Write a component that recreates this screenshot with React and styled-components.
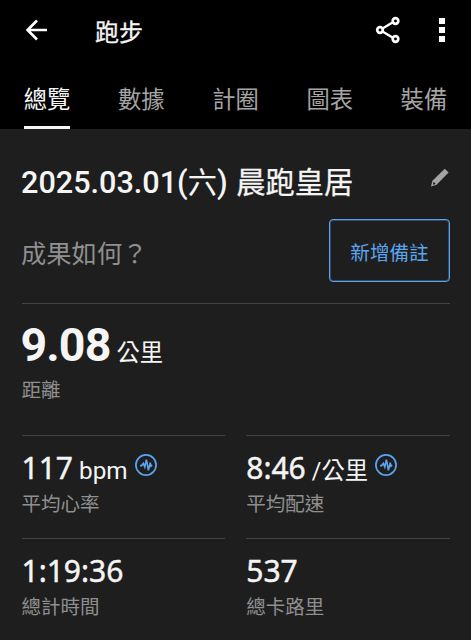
import styled, { createGlobalStyle } from 'styled-components';

const GlobalStyle = createGlobalStyle`
    * {
        box-sizing: border-box;
    }

    body {
        margin: 0;
        background: #1e1e1e;
        font-family: "Noto Sans", "Noto Sans CJK TC", sans-serif;
        color: #f5f5f5;
    }
`;

const Screen = styled.div`
    width: 471px;
    height: 640px;
    overflow: hidden;
    background: #1e1e1e;
`;

const Header = styled.header`
    height: 129px;
    background: #000;
    display: flex;
    flex-direction: column;
    justify-content: space-between;
`;

const Toolbar = styled.div`
    height: 59px;
    display: flex;
    align-items: center;
    padding: 0 22px 0 24px;
`;

const Title = styled.h1`
    flex: 1;
    margin: 2px 0 0 47px;
    font-family: "Noto Sans CJK TC", sans-serif;
    font-size: 24px;
    font-weight: 400;
    line-height: 60px;
    -webkit-text-stroke: 0.3px currentColor;
`;

const IconButton = styled.button`
    display: flex;
    padding: 0;
    border: none;
    background: none;
    color: ${props => props.$color || '#fff'};
    margin-left: ${props => props.$gap || 0}px;
    margin-bottom: ${props => props.$lift || 0}px;
    cursor: pointer;
`;

const Tabs = styled.nav`
    display: grid;
    grid-template-columns: repeat(5, 1fr);
    justify-items: center;
`;

const Tab = styled.a`
    height: 60px;
    padding-top: 9px;
    border-bottom: 3px solid ${props => props.$active ? '#f5f5f5' : 'transparent'};
    color: ${props => props.$active ? '#f5f5f5' : '#a5a5a5'};
    font-family: "Noto Sans CJK TC", sans-serif;
    font-size: 23.3px;
    line-height: 40px;
    cursor: pointer;
`;

const Content = styled.main`
    padding: 0 21px 0 21.5px;
`;

const TitleRow = styled.div`
    height: 90px;
    padding-top: 17px;
    display: flex;
    align-items: center;
    justify-content: space-between;
`;

const ActivityName = styled.h2`
    margin: 0 0 0 -0.5px;
    font-family: Roboto, "Noto Sans CJK TC", sans-serif;
    font-size: 29.2px;
    font-weight: 400;
    line-height: 40px;
    white-space: pre;
    -webkit-text-stroke: 0.3px currentColor;
`;

const ActivityDate = styled.span`
    margin-right: 1.5px;
    font-size: 30.6px;
    font-weight: 500;
    -webkit-text-stroke: 0;
`;

const Weekday = styled.span`
    font-size: 29.2px;
    font-weight: 400;
`;

const NoteRow = styled.div`
    height: 85px;
    display: flex;
    justify-content: space-between;
    border-bottom: 1px solid #444;
`;

const Prompt = styled.p`
    margin: 0 0 0 -0.5px;
    color: #8f8f8f;
    font-family: "Noto Sans CJK TC", sans-serif;
    font-size: 25.3px;
    line-height: 67px;
`;

const NoteButton = styled.button`
    width: 121px;
    height: 63px;
    padding: 2px 0 0;
    border: 1px solid #5ba4ee;
    border-radius: 4px;
    box-shadow: inset 0 0 0 1px rgba(91, 164, 238, 0.35);
    background: none;
    color: #5ba4ee;
    font-family: "Noto Sans CJK TC", sans-serif;
    font-size: 19.6px;
    line-height: 59px;
    cursor: pointer;
`;

const Distance = styled.section`
    height: 131px;
    padding-top: 11px;
`;

const StatGrid = styled.section`
    display: grid;
    grid-template-columns: 1fr 1fr;
    column-gap: 21px;
`;

const Stat = styled.div`
    height: 103px;
    padding-top: 11px;
    border-top: 1px solid #444;
`;

const ValueLine = styled.div`
    display: flex;
    align-items: baseline;
    height: ${props => props.$large ? 60 : 42}px;
    line-height: ${props => props.$large ? 61 : 42}px;
`;

const Value = styled.span`
    font-size: 30px;
    -webkit-text-stroke: 0.45px currentColor;
`;

const LargeValue = styled.span`
    margin-left: -1px;
    font-family: Roboto, sans-serif;
    font-size: 46.5px;
    font-weight: 700;
    letter-spacing: -0.9px;
`;

const Unit = styled.span`
    margin-left: 6px;
    font-family: Roboto, "Noto Sans CJK TC", sans-serif;
    font-size: ${props => props.$size || 23.3}px;
`;

const Label = styled.div`
    color: #8f8f8f;
    font-family: "Noto Sans CJK TC", sans-serif;
    font-size: 19.5px;
    line-height: 28px;
`;

const Badge = styled.span`
    align-self: flex-start;
    display: flex;
    margin: 7px 0 0 7px;
`;

function BackIcon() {
    return (
        <svg width="24" height="24" viewBox="0 0 24 24" fill="none" stroke="currentColor" strokeWidth="2.6">
            <path d="M13 2.5L3.5 12l9.5 9.5M3.5 12H23" />
        </svg>
    );
}

function ShareIcon() {
    return (
        <svg width="26" height="28" viewBox="0 0 26 28" fill="none" stroke="currentColor">
            <path d="M7.5 12.5L17.5 6.5M7.5 15.5L17.5 21.5" strokeWidth="2.4" />
            <g strokeWidth="2.7">
                <circle cx="5" cy="14" r="2.8" />
                <circle cx="20.5" cy="5" r="2.8" />
                <circle cx="20.5" cy="23" r="2.8" />
            </g>
        </svg>
    );
}

function MoreIcon() {
    return (
        <svg width="14" height="26" viewBox="0 0 14 26" fill="currentColor">
            <path d="M4 1h6v6H4zM4 10h6v6H4zM4 19h6v6H4z" />
        </svg>
    );
}

function PencilIcon() {
    return (
        <svg width="20" height="20" viewBox="0 0 20 20">
            <path d="M14.8 0.8L18.6 4.6L6.6 16.8L1 18.4L2.4 12.8Z" fill="currentColor" />
            <path d="M3.6 13.8L5.8 16L2.8 16.8Z" fill="#1e1e1e" />
        </svg>
    );
}

function PulseBadge() {
    return (
        <Badge>
            <svg width="22" height="22" viewBox="0 0 22 22" fill="none" stroke="#5ba4ee">
                <circle cx="11" cy="11" r="10.1" strokeWidth="1.7" />
                <path d="M5 11.6H6.6L8.4 9.4L9.8 13L11.4 5.6L13.4 16.4L15.2 8.8L16 12.2L17.2 11.2" strokeWidth="1.6" />
            </svg>
        </Badge>
    );
}

const tabs = ['總覽', '數據', '計圈', '圖表', '裝備'];

const stats = [
    { value: '117', unit: 'bpm', unitSize: 24.3, label: '平均心率', zone: true },
    { value: '8:46', unit: '/公里', label: '平均配速', zone: true },
    { value: '1:19:36', label: '總計時間' },
    { value: '537', label: '總卡路里' },
];

export default function App() {
    return (
        <Screen>
            <GlobalStyle />
            <Header>
                <Toolbar>
                    <IconButton aria-label="返回"><BackIcon /></IconButton>
                    <Title>跑步</Title>
                    <IconButton aria-label="分享"><ShareIcon /></IconButton>
                    <IconButton aria-label="更多" $gap={34}><MoreIcon /></IconButton>
                </Toolbar>
                <Tabs>
                    {tabs.map((tab, i) => <Tab key={tab} $active={i === 0}>{tab}</Tab>)}
                </Tabs>
            </Header>
            <Content>
                <TitleRow>
                    <ActivityName>
                        <ActivityDate>2025.03.01(<Weekday>六</Weekday>)</ActivityDate> 晨跑皇居
                    </ActivityName>
                    <IconButton aria-label="編輯" $color="#a3a3a3" $lift={9}><PencilIcon /></IconButton>
                </TitleRow>
                <NoteRow>
                    <Prompt>成果如何？</Prompt>
                    <NoteButton>新增備註</NoteButton>
                </NoteRow>
                <Distance>
                    <ValueLine $large>
                        <LargeValue>9.08</LargeValue>
                        <Unit>公里</Unit>
                    </ValueLine>
                    <Label>距離</Label>
                </Distance>
                <StatGrid>
                    {stats.map(stat => (
                        <Stat key={stat.label}>
                            <ValueLine>
                                <Value>{stat.value}</Value>
                                {stat.unit && <Unit $size={stat.unitSize}>{stat.unit}</Unit>}
                                {stat.zone && <PulseBadge />}
                            </ValueLine>
                            <Label>{stat.label}</Label>
                        </Stat>
                    ))}
                </StatGrid>
            </Content>
        </Screen>
    );
}
